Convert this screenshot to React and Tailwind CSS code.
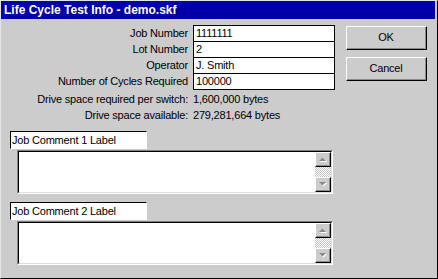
import React from 'react'

const font = "font-['Liberation_Sans',Arial,sans-serif]"

const fields = [
  { label: 'Job Number', value: '1111111' },
  { label: 'Lot Number', value: '2' },
  { label: 'Operator', value: 'J. Smith' },
  { label: 'Number of Cycles Required', value: '100000' },
]

function Arrow({ up }) {
  return (
    <svg width="9" height="6" viewBox="0 0 9 6" className="block">
      {up ? (
        <>
          <path d="M1 5h7L4.5 1.5z" fill="#ffffff" transform="translate(1 1)" />
          <path d="M1 5h7L4.5 1.5z" fill="#8a8a8a" />
        </>
      ) : (
        <>
          <path d="M1 1h7L4.5 4.5z" fill="#ffffff" transform="translate(1 1)" />
          <path d="M1 1h7L4.5 4.5z" fill="#8a8a8a" />
        </>
      )}
    </svg>
  )
}

function ScrollButton({ up }) {
  return (
    <div className="h-[15px] border-t border-l border-t-white border-l-white border-r border-b border-r-black border-b-black bg-[#cccccc]">
      <div className="h-full border-r border-b border-[#8a8a8a] flex items-center justify-center">
        <Arrow up={up} />
      </div>
    </div>
  )
}

function CommentBlock({ label, className = '' }) {
  return (
    <div className={className}>
      <div className="w-[137px] h-[18px] bg-white border-t border-l border-t-black border-l-black border-r border-b border-r-white border-b-white pl-[1px] leading-[16px]">
        {label}
      </div>
      {/* sunken memo box with disabled scrollbar */}
      <div className="ml-[7px] mt-[1px] w-[316px] h-[44px] border-t border-l border-t-[#808080] border-l-[#808080] border-r border-b border-r-white border-b-white">
        <div className="h-full flex bg-white border-t border-l border-t-black border-l-black border-r border-b border-r-[#dcdcdc] border-b-[#dcdcdc]">
          <div className="flex-1" />
          <div className="w-[16px] flex flex-col">
            <ScrollButton up />
            <div className="flex-1 bg-[repeating-conic-gradient(#ffffff_0_25%,#c4c4c4_0_50%)] bg-[length:2px_2px]" />
            <ScrollButton />
          </div>
        </div>
      </div>
    </div>
  )
}

function Button({ children, className = '' }) {
  return (
    <div className={`w-[81px] h-[24px] border-t border-l border-t-white border-l-white border-r border-b border-r-black border-b-black ${className}`}>
      <div className="h-full border-r border-b border-[#8a8a8a] flex items-center justify-center">
        {children}
      </div>
    </div>
  )
}

export default function App() {
  return (
    <div className={`w-[438px] h-[279px] bg-[#cccccc] border-t border-l border-t-[#e4e4e4] border-l-[#e4e4e4] border-r border-b border-r-black border-b-black text-black text-[11px] tracking-[-0.2px] ${font}`}>
      <div className="h-[18px] mr-[2px] bg-[#0000a8] text-white text-[12px] tracking-normal font-bold leading-[18px] pl-[3px]">
        Life Cycle Test Info - demo.skf
      </div>

      <div className="flex">
        <div className="w-[334px]">
          {/* fields */}
          <div className="pt-[6px]">
            {fields.map((f) => (
              <div key={f.label} className="flex items-center -mb-px">
                <div className="w-[187px] text-right">{f.label}</div>
                <div className="ml-[5px] w-[142px] h-[17px] bg-white border border-black pl-[2px] leading-[15px]">
                  {f.value}
                </div>
              </div>
            ))}
          </div>

          <div className="mt-[2px] leading-[16px]">
            <div className="flex">
              <div className="w-[187px] text-right">Drive space required per switch:</div>
              <div className="ml-[5px]">1,600,000 bytes</div>
            </div>
            <div className="flex">
              <div className="w-[187px] text-right">Drive space available:</div>
              <div className="ml-[5px]">279,281,664 bytes</div>
            </div>
          </div>

          <CommentBlock label="Job Comment 1 Label" className="ml-[9px] mt-[8px]" />
          <CommentBlock label="Job Comment 2 Label" className="ml-[9px] mt-[8px]" />
        </div>

        <div className="ml-[11px] pt-[7px]">
          <Button>OK</Button>
          <Button className="mt-[7px]">Cancel</Button>
        </div>
      </div>
    </div>
  )
}
